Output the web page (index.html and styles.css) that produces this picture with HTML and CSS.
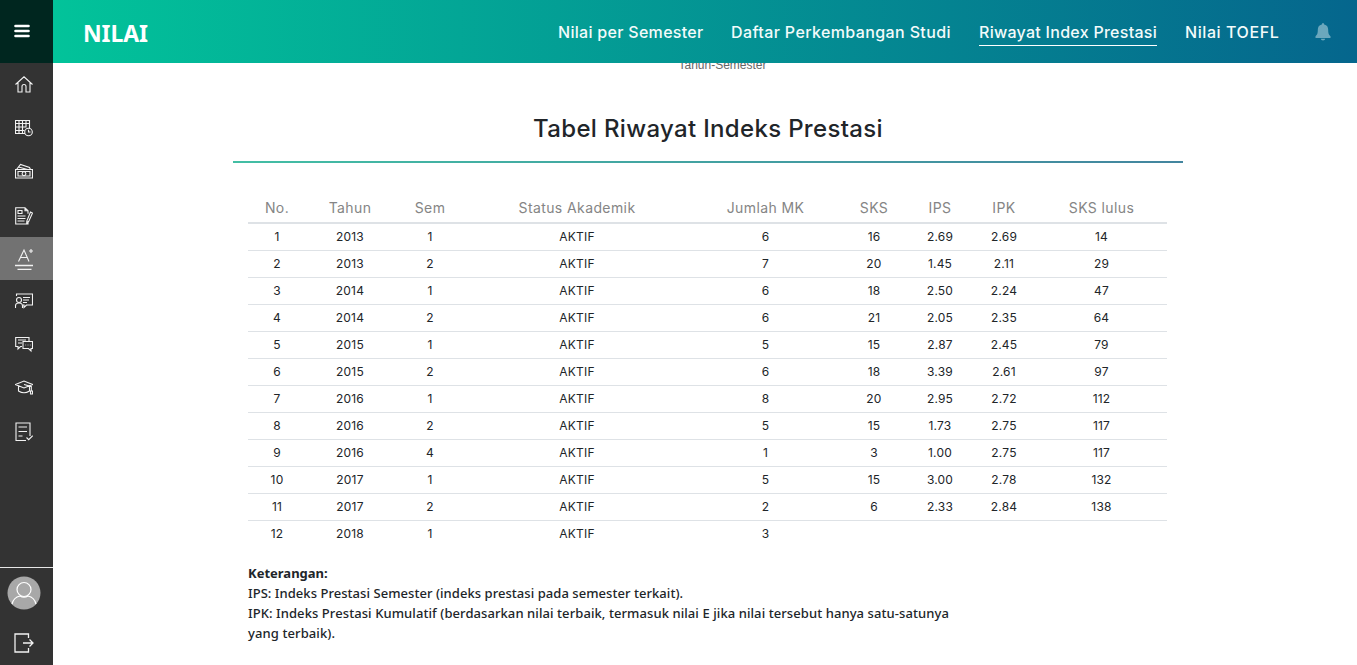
FILE: index.html
```html
<!DOCTYPE html>
<html lang="id">
<head>
<meta charset="utf-8">
<title>Nilai</title>
<link rel="stylesheet" href="styles.css">
</head>
<body>
<div class="app">
  <aside class="sidebar">
    <button class="menu" aria-label="Menu"><svg width="16" height="14" viewBox="0 0 16 14"><path d="M1.500 2h13M1.500 7h13M1.500 12h13" stroke="#fff" stroke-width="2.600" stroke-linecap="round"/></svg></button>
    <nav class="side-nav">
      <a class="side-item"><svg class="icon" viewBox="0 0 18 18"><path d="M.5 8.500 9 .8 17.500 8.500M3 6.500v9.500h4V10.500q0-2 2-2t2 2v5.500h4V6.500"/></svg></a>
      <a class="side-item"><svg class="icon" viewBox="0 0 18 18"><path d="M10 14.500H.5V1.500h14V9M.5 4.500h14M.5 8h11M.5 11.500h9M4 1.500v13M7.500 1.500v13M11 1.500v7"/><circle cx="13.500" cy="13" r="3.800"/><path d="M13.500 10.800V13h2"/></svg></a>
      <a class="side-item raised"><svg class="icon" viewBox="0 0 18 18"><path d="M.5 7.500h17v8.500H.5zM3 9.500h12v4.500H3zM1.500 7.500l4-5 9 3 1 2M3.500 5l9 2.500"/><circle cx="9" cy="11.700" r="1.900"/></svg></a>
      <a class="side-item lowered"><svg class="icon" viewBox="0 0 18 18"><path d="M13 14v3H.7V.8H10l3 3v3M10 .8v3h3M3 3.500h4v3H3zM2.500 9h8M2.500 11.500h8M2.500 14h7M15.500 5l2 1-4 9-1.800 1.500.1-2.500z"/></svg></a>
      <a class="side-item active"><svg class="grade" viewBox="0 0 20 22"><path d="M4.500 13.500 10 2 15 13.500M6.500 9.500h7M17 1v4M15 3h4"/><path class="bars" d="M1 17.500h18M3.500 21.300h14"/></svg></a>
      <a class="side-item late raised"><svg class="icon" viewBox="0 0 18 18"><path d="M1.500 4V2h16v11h-6l-2.500 2.500V13H8M8 5.500h7M8 8h6M8 10.500h4"/><circle cx="4" cy="8" r="2.500"/><path d="M.5 16v-2q0-3 3.500-3t3.500 3v2"/></svg></a>
      <a class="side-item late raised"><svg class="icon" viewBox="0 0 18 18"><path d="M7 11.500H5.500L3 14v-2.500H.7V2.500H14V6M3 5h8M3 8h4"/><path d="M8 6.500h9.500v7H16V16l-2.500-2.500H8zM10.500 10h.6M12.700 10h.6M14.900 10h.6"/></svg></a>
      <a class="side-item late raised"><svg class="icon" viewBox="0 0 18 18"><path d="M.5 6.500 9 3l8.500 3.500L9 10zM3.500 8v5q5.500 3.500 11 0V8M9 6.500l7.300 2V13M15.500 13h2v3h-2z"/></svg></a>
      <a class="side-item late last"><svg class="icon tall" viewBox="0 0 18 20"><path d="M11 18.500H1V1h14v13M3.500 5H12M3.500 9.500H12M3.500 14h4M11.500 15.500l2.200 2.200 4-4"/></svg></a>
    </nav>
    <div class="account">
      <svg class="avatar" width="34" height="34" viewBox="0 0 34 34"><circle cx="17" cy="17" r="16.500" fill="#a8a8a8"/><g fill="none" stroke="#fff" stroke-width="1.200"><circle cx="17" cy="13.500" r="7"/><path d="M5 28q1.500-6.500 8-8 4 2.500 8 0 6.500 1.500 8 8"/></g></svg>
      <svg class="logout" width="20" height="20" viewBox="0 0 20 20"><path d="M14.500 5V1H1v18h13.500v-4M9 10h10M15.500 6.500 19 10l-3.500 3.500"/></svg>
    </div>
  </aside>
  <div class="page">
    <header class="topbar">
      <h1 class="brand">NILAI</h1>
      <nav class="tabs">
        <a class="tab t1">Nilai per Semester</a>
        <a class="tab t2">Daftar Perkembangan Studi</a>
        <a class="tab t3 current">Riwayat Index Prestasi</a>
        <a class="tab t4">Nilai TOEFL</a>
      </nav>
      <svg class="bell" width="16" height="18" viewBox="0 0 16 18"><path d="M8 0q1.200 0 1.200 1.500C12 2 13.200 4 13.200 7c0 4 1 5 2.300 6.300V15H.5v-1.700C1.800 12 2.800 11 2.800 7c0-3 1.200-5 4-5.500Q6.800 0 8 0zM5.800 15.800h4.400Q10 17.500 8 17.500t-2.200-1.700z" fill="#6ba7bd"/></svg>
    </header>
    <main class="content">
      <div class="axis"><span>Tahun-Semester</span></div>
      <h2 class="title"><span>Tabel Riwayat Indeks Prestasi</span></h2>
      <div class="rule"></div>
      <table class="scores">
        <colgroup><col class="c-no"><col class="c-year"><col class="c-sem"><col class="c-status"><col class="c-mk"><col class="c-sks"><col class="c-ips"><col class="c-ipk"><col class="c-total"></colgroup>
        <thead><tr><th>No.</th><th>Tahun</th><th>Sem</th><th>Status Akademik</th><th>Jumlah MK</th><th>SKS</th><th>IPS</th><th>IPK</th><th>SKS lulus</th></tr></thead>
        <tbody>
          <tr><td>1</td><td>2013</td><td>1</td><td>AKTIF</td><td>6</td><td>16</td><td>2.69</td><td>2.69</td><td>14</td></tr>
          <tr><td>2</td><td>2013</td><td>2</td><td>AKTIF</td><td>7</td><td>20</td><td>1.45</td><td>2.11</td><td>29</td></tr>
          <tr><td>3</td><td>2014</td><td>1</td><td>AKTIF</td><td>6</td><td>18</td><td>2.50</td><td>2.24</td><td>47</td></tr>
          <tr><td>4</td><td>2014</td><td>2</td><td>AKTIF</td><td>6</td><td>21</td><td>2.05</td><td>2.35</td><td>64</td></tr>
          <tr><td>5</td><td>2015</td><td>1</td><td>AKTIF</td><td>5</td><td>15</td><td>2.87</td><td>2.45</td><td>79</td></tr>
          <tr><td>6</td><td>2015</td><td>2</td><td>AKTIF</td><td>6</td><td>18</td><td>3.39</td><td>2.61</td><td>97</td></tr>
          <tr><td>7</td><td>2016</td><td>1</td><td>AKTIF</td><td>8</td><td>20</td><td>2.95</td><td>2.72</td><td>112</td></tr>
          <tr><td>8</td><td>2016</td><td>2</td><td>AKTIF</td><td>5</td><td>15</td><td>1.73</td><td>2.75</td><td>117</td></tr>
          <tr><td>9</td><td>2016</td><td>4</td><td>AKTIF</td><td>1</td><td>3</td><td>1.00</td><td>2.75</td><td>117</td></tr>
          <tr><td>10</td><td>2017</td><td>1</td><td>AKTIF</td><td>5</td><td>15</td><td>3.00</td><td>2.78</td><td>132</td></tr>
          <tr><td>11</td><td>2017</td><td>2</td><td>AKTIF</td><td>2</td><td>6</td><td>2.33</td><td>2.84</td><td>138</td></tr>
          <tr><td>12</td><td>2018</td><td>1</td><td>AKTIF</td><td>3</td><td></td><td></td><td></td><td></td></tr>
        </tbody>
      </table>
      <div class="notes">
        <strong>Keterangan:</strong><br>
        <span class="n1">IPS: Indeks Prestasi Semester (indeks prestasi pada semester terkait).</span><br>
        <span class="n2">IPK: Indeks Prestasi Kumulatif (berdasarkan nilai terbaik, termasuk nilai E jika nilai tersebut hanya satu-satunya</span><br>
        <span class="n3">yang terbaik).</span>
      </div>
    </main>
  </div>
</div>
</body>
</html>
```
FILE: styles.css
```css
* { box-sizing: border-box; }
body { margin: 0; background: #fff; color: #212529; font-family: Inter, "Liberation Sans", sans-serif; }
.app { display: flex; height: 665px; overflow: hidden; }
.sidebar { width: 53px; flex: none; background: #333; display: flex; flex-direction: column; }
.menu { height: 63px; flex: none; border: 0; background: #00261f; display: flex; align-items: center; padding: 0 0 2px 14px; }
.side-nav { display: flex; flex-direction: column; flex: 1; }
.side-item { height: 43.5px; padding-left: 15px; display: flex; align-items: center; }
.side-item.raised { padding-bottom: 2px; }
.side-item.lowered { padding-top: 1px; }
.side-item.late { height: 43px; }
.side-item.last { height: 46px; }
.side-item.active { background: #727272; height: 43px; padding-left: 14px; }
.icon { width: 18px; height: 18px; }
.icon.tall { height: 20px; }
.grade { width: 20px; height: 22px; }
.bars { stroke-width: 1.3; }
.icon, .grade, .logout { fill: none; stroke: #f2f2f2; stroke-width: 1.1; }
.logout { stroke-width: 1.3; }
.account { height: 98px; border-top: 1px solid #e6e6e6; display: flex; flex-direction: column; padding-top: 8px; }
.avatar { margin-left: 6.5px; }
.logout { margin: 23px 0 0 14px; }
.page { flex: 1; min-width: 0; display: flex; flex-direction: column; }
.topbar { height: 63px; flex: none; display: flex; align-items: center; background: linear-gradient(90deg, #02c39a, #05668d); color: #fff; padding: 0 26px 0 30px; }
.brand { margin: 3px 0 0; font: 700 23px/30px "Noto Sans", sans-serif; letter-spacing: -0.1px; }
.tabs { display: flex; gap: 28px; margin: 2px 36px 0 auto; font-size: 16px; font-weight: 500; }
.tab { height: 26px; line-height: 24px; white-space: nowrap; color: #f3fbfb; }
.t1 { width: 145px; letter-spacing: .3px; }
.t2 { width: 220px; letter-spacing: .38px; }
.t3 { width: 178px; letter-spacing: .28px; }
.t4 { width: 94px; letter-spacing: .58px; }
.current { border-bottom: 1px solid #fff; }
.content { padding: 0 174px 0 180px; }
.axis { height: 37px; overflow: hidden; font: 12px/14px "Liberation Sans", sans-serif; color: #666; }
.axis span { display: block; margin: -5px 0 0 445.5px; }
.title { margin: 11px 0 0; height: 50px; font-size: 24px; line-height: 36px; font-weight: 450; text-align: center; letter-spacing: .33px; }
.rule { height: 2px; background: linear-gradient(90deg, #43bea4, #43859f); }
.scores { width: 919px; margin: 31px 0 0 15px; border-collapse: separate; border-spacing: 0; table-layout: fixed; text-align: center; }
.scores th, .scores td { padding: 0; }
.scores th { height: 30px; padding-bottom: 1px; border-bottom: 2px solid #dee2e6; font-size: 14px; line-height: 20px; font-weight: 400; letter-spacing: .4px; color: #858585; }
.scores td { height: 27px; border-bottom: 1px solid #dee2e6; font-size: 12px; line-height: 20px; font-weight: 400; letter-spacing: .2px; }
.scores td:last-child, .scores th:last-child { padding-left: 3px; }
.scores tbody tr:last-child td { border-bottom-color: transparent; }
.c-no { width: 58px; } .c-year { width: 88px; } .c-sem { width: 72px; } .c-status { width: 222px; } .c-mk { width: 155px; } .c-sks { width: 62px; } .c-ips { width: 70px; } .c-ipk { width: 58px; } .c-total { width: 134px; }
.notes { margin: 15px 0 0 15px; font: 500 13px/20px "Noto Sans", sans-serif; white-space: nowrap; }
.notes strong { font-weight: 700; }
.n1 { letter-spacing: .05px; }
.n2 { letter-spacing: .08px; }
.n3 { letter-spacing: .1px; }
```
